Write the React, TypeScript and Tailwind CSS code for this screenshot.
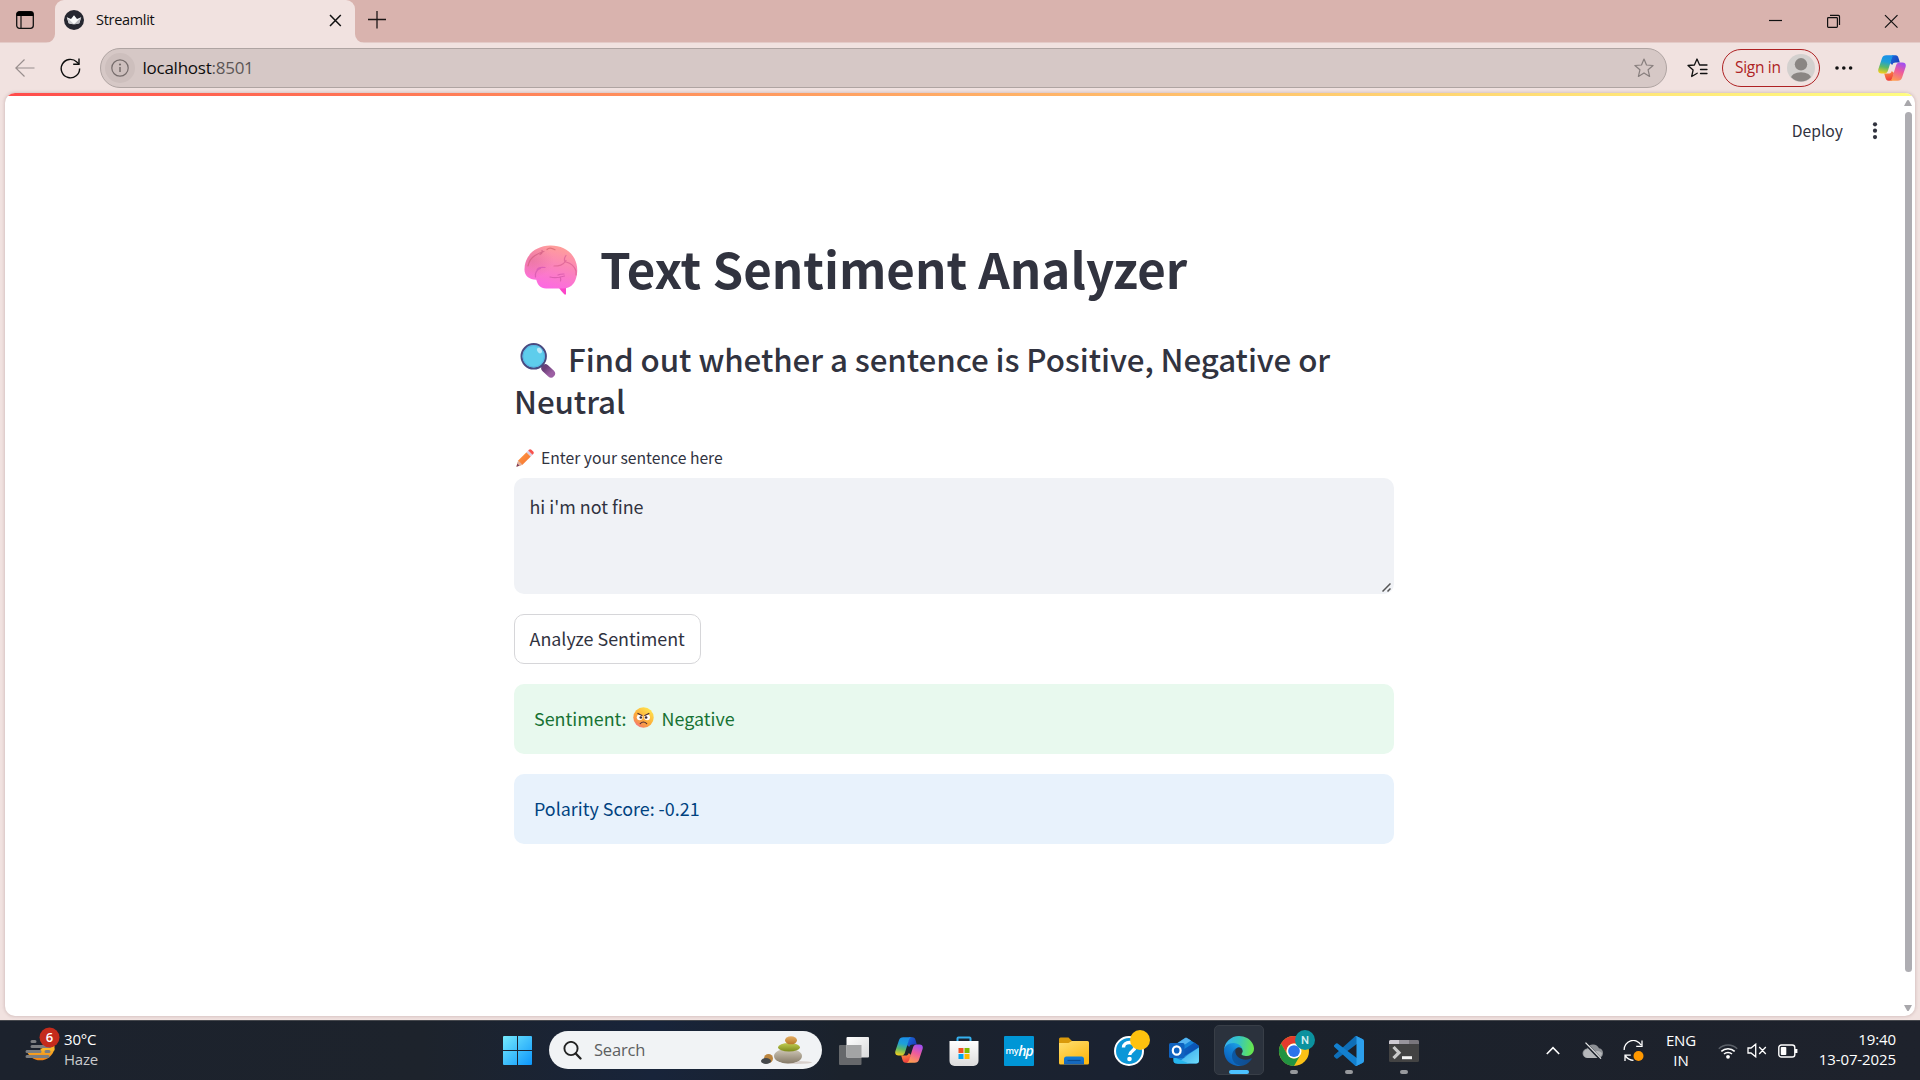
import React from 'react';

const UI = "font-['Open_Sans','Noto_Sans',sans-serif]";
const APP = "font-['Noto_Sans_CJK_SC','Source_Sans_Pro',sans-serif]";

/* ---------- browser icons ---------- */

function TabActionsIcon() {
  return (
    <svg width="18" height="18" viewBox="0 0 18 18" className="shrink-0">
      <rect x="0.7" y="0.7" width="16.6" height="16.6" rx="2.8" fill="none" stroke="#111" strokeWidth="1.3" />
      <path d="M.6 5V3.2A2.6 2.6 0 0 1 3.2.6h11.6a2.6 2.6 0 0 1 2.6 2.6V5z" fill="#000" />
      <path d="M5 5v12" stroke="#111" strokeWidth="1.2" />
    </svg>
  );
}

function StreamlitFavicon() {
  return (
    <svg width="20" height="20" viewBox="0 0 20 20" className="shrink-0">
      <circle cx="10" cy="10" r="10" fill="#262730" />
      <path d="M2.800 7.200 7 9l3-3.800L13 9l4.200-1.800-1.900 6Q10 15.300 4.700 13.200z" fill="#fafafa" />
      <path d="M2.800 7.200 10 14.300q-3 0-5.300-1.100z" fill="#c9c9cd" />
      <path d="M17.200 7.200 10 14.300q3 0 5.300-1.100z" fill="#b9b9be" />
    </svg>
  );
}

function BackIcon() {
  return (
    <svg width="20" height="18" viewBox="0 0 20 18" fill="none" stroke="#988e8d" strokeWidth="1.2" className="shrink-0">
      <path d="M19.500 9H.8M9.500.5.8 9l8.700 8.500" />
    </svg>
  );
}

function ReloadIcon() {
  return (
    <svg width="21" height="21" viewBox="0 0 21 21" fill="none" stroke="#0c0c0c" strokeWidth="1.400" className="shrink-0">
      <path d="M19.600 10.400A9.200 9.200 0 1 1 16.800 4L19 6" />
      <path d="M19 .5V6.200H13.200" />
    </svg>
  );
}

function StarIcon() {
  return (
    <svg width="20" height="20" viewBox="0 0 20 20" fill="none" stroke="#877e7d" strokeWidth="1.200" strokeLinejoin="round">
      <path d="m10 1 2.500 6 6.600.5-5 4.300 1.500 6.600L10 14.900l-5.600 3.500 1.500-6.600-5-4.300L7.500 7z" />
    </svg>
  );
}

function FavoritesIcon() {
  return (
    <svg width="21" height="20" viewBox="0 0 21 20" fill="none" stroke="#111" strokeWidth="1.300" strokeLinejoin="round" strokeLinecap="round">
      <path d="M10.200 15.200 4.700 18.500l1.400-6.500L1 7.500 7.400 7 10 1l2.600 6H20M13.500 11.500H20M13.500 15.500H20" />
    </svg>
  );
}

function Avatar() {
  return (
    <svg width="28" height="28" viewBox="0 0 28 28">
      <defs>
        <clipPath id="avatarClip"><circle cx="14" cy="14" r="13.500" /></clipPath>
      </defs>
      <circle cx="14" cy="14" r="14" fill="#d3d0ce" />
      <circle cx="14" cy="10.300" r="6.200" fill="#8a8683" />
      <ellipse cx="14" cy="24.700" rx="10.300" ry="6.500" fill="#8a8683" clipPath="url(#avatarClip)" />
    </svg>
  );
}

function CopilotIcon({ id, size }: { id: string; size: number }) {
  return (
    <svg width={size} height={size * 0.93} viewBox="0 0 28 26" className="shrink-0">
      <defs>
        <linearGradient id={id + 'a'} x1="0.500" y1="0" x2="0.300" y2="1">
          <stop offset="0" stopColor="#1a8fe8" />
          <stop offset="0.350" stopColor="#1ea0d8" />
          <stop offset="0.650" stopColor="#5cb869" />
          <stop offset="1" stopColor="#f2cf1c" />
        </linearGradient>
        <linearGradient id={id + 'b'} x1="0.700" y1="0" x2="0.300" y2="1">
          <stop offset="0" stopColor="#a24ff0" />
          <stop offset="0.450" stopColor="#ee5b9c" />
          <stop offset="1" stopColor="#ffa04d" />
        </linearGradient>
        <linearGradient id={id + 'c'} x1="0" y1="0" x2="1" y2="0.600">
          <stop offset="0" stopColor="#1a6de0" />
          <stop offset="1" stopColor="#1b3fb8" />
        </linearGradient>
        <linearGradient id={id + 'd'} x1="0" y1="0" x2="0.300" y2="1">
          <stop offset="0" stopColor="#ff9a42" />
          <stop offset="1" stopColor="#ef3f3d" />
        </linearGradient>
      </defs>
      <path d="M14 .3h3.500c1.700 0 2.500 1 3 2.600l1.300 4.600h-4c-2 0-3 .7-3.600 2.600L12 8z" fill={`url(#${id}c)`} />
      <path d="M14 25.700h-3.500c-1.700 0-2.500-1-3-2.600L6.200 18.500h4c2 0 3-.7 3.600-2.600L16 18z" fill={`url(#${id}d)`} />
      <path d="M8.300.3h9c-2 0-2.800 1-3.400 2.800l-4 12.600c-.6 1.900-1.700 2.800-3.600 2.800H3.500C.8 18.500-.3 16.600.4 14L3.900 3.500C4.600 1.400 6 .3 8.300.3z" fill={`url(#${id}a)`} />
      <path d="M19.700 25.700h-9c2 0 2.800-1 3.400-2.800l4-12.600c.6-1.900 1.700-2.800 3.600-2.800h2.800c2.700 0 3.800 1.900 3.100 4.500l-3.500 10.500c-.7 2.100-2.100 3.200-4.400 3.200z" fill={`url(#${id}b)`} />
    </svg>
  );
}

/* ---------- emoji drawings ---------- */

function BrainEmoji() {
  return (
    <svg width="55" height="50" viewBox="0 0 55 50" className="shrink-0">
      <defs>
        <linearGradient id="brain" x1="0.650" y1="0" x2="0.350" y2="1">
          <stop offset="0" stopColor="#ff9f98" />
          <stop offset="0.450" stopColor="#fb85b9" />
          <stop offset="1" stopColor="#fc68e4" />
        </linearGradient>
        <radialGradient id="brainShade" cx="0.150" cy="0.350" r="0.400">
          <stop offset="0" stopColor="#dd6a8e" stopOpacity="0.450" />
          <stop offset="1" stopColor="#dd6a8e" stopOpacity="0" />
        </radialGradient>
      </defs>
      <path d="M34 41h8v8.500h-1.500C37.500 46.500 35.500 44 34 41z" fill="#fb45c8" />
      <path d="M26 .6C39 .3 49.500 7 52.500 19c2 8-.3 16-3 19.500-2.500 3.500-6 5-11 5H22c-5.500 0-8.500-3.500-9.700-8.700C5 34.500.5 31 .5 24.500.5 10 12 1 26 .6z" fill="url(#brain)" />
      <path d="M26 .6C39 .3 49.500 7 52.500 19c2 8-.3 16-3 19.500-2.500 3.500-6 5-11 5H22c-5.500 0-8.500-3.500-9.700-8.700C5 34.500.5 31 .5 24.500.5 10 12 1 26 .6z" fill="url(#brainShade)" />
      <g fill="none" strokeLinecap="round" strokeWidth="1.200">
        <path d="M4 21c1-5 3-8 7-10.500S17.500 7 20 6.500M16 9.500c2-1 2.500-2.500 2-4" stroke="#d9678a" />
        <path d="M23 4.500c2-2 5-1.500 8 .3" stroke="#e0737c" />
        <path d="M11.500 32c-1-4 1.500-7.500 5-8.500M13 25c1-3 4-3 8-2.500" stroke="#dd60b4" />
        <path d="M26 32c5 1.500 10 .5 14.500-1M36 32c1 1.500 1 2.500.5 4M34 30c2-1 4-1 6-1" stroke="#dd60b0" />
        <path d="M30 21c5 0 9-.5 12-5.500M41 17c-1-2-1-4 1-6.500M42 17c4 1 8 3 10 9v4" stroke="#e36c9b" />
      </g>
    </svg>
  );
}

function MagnifierEmoji() {
  return (
    <svg width="36" height="35" viewBox="0 0 36 35" className="inline-block align-top">
      <defs>
        <linearGradient id="lensHandle" x1="0" y1="0" x2="1" y2="1">
          <stop offset="0" stopColor="#6b3f78" />
          <stop offset="1" stopColor="#9c5fa3" />
        </linearGradient>
      </defs>
      <path d="m20.500 21.500 4.500 4" stroke="#4c4468" strokeWidth="3" />
      <path d="m25.300 25.200 5.700 5.300" stroke="url(#lensHandle)" strokeWidth="8" strokeLinecap="round" />
      <circle cx="13.700" cy="13.300" r="12.200" fill="#5ecdec" stroke="#4a4a80" strokeWidth="2" />
      <circle cx="13.700" cy="13.300" r="10.700" fill="none" stroke="#58b4e4" strokeWidth="1" />
      <ellipse cx="19.500" cy="7.500" rx="2.200" ry="3" transform="rotate(-35 19.500 7.500)" fill="#b8eafa" />
    </svg>
  );
}

function PencilEmoji() {
  return (
    <svg width="18" height="18" viewBox="0 0 18 18" className="shrink-0">
      <defs>
        <linearGradient id="pencil" x1="0" y1="0" x2="1" y2="1">
          <stop offset="0" stopColor="#ff9a45" />
          <stop offset="1" stopColor="#f5702f" />
        </linearGradient>
      </defs>
      <path d="M2.200 11.500 10.500 3.200l4.300 4.300-8.300 8.300L.6 17.600z" fill="url(#pencil)" />
      <path d="m2.200 11.500 4.300 4.300-5.900 1.800z" fill="#e3b2a0" />
      <path d="m.4 17.800.9-3.200 2.200 2.200z" fill="#7a3f5a" />
      <path d="m10.500 3.200 1.700-1.700 4.300 4.300-1.700 1.700z" fill="#d9cfe6" />
      <path d="m12.200 1.500.7-.7c.8-.8 1.700-.8 2.500 0l1.800 1.800c.8.8.8 1.700 0 2.500l-.7.7z" fill="#f7524d" />
    </svg>
  );
}

function AngryEmoji() {
  return (
    <svg width="21" height="21" viewBox="0 0 21 21" className="shrink-0">
      <defs>
        <linearGradient id="angry" x1="0.850" y1="0.100" x2="0.200" y2="1">
          <stop offset="0" stopColor="#ffe34d" />
          <stop offset="0.550" stopColor="#fdac3a" />
          <stop offset="0.820" stopColor="#f78d55" />
          <stop offset="1" stopColor="#f2689a" />
        </linearGradient>
      </defs>
      <circle cx="10.500" cy="10.500" r="10.200" fill="url(#angry)" />
      <circle cx="6.700" cy="10.300" r="2.900" fill="#fff" />
      <circle cx="14.100" cy="10.300" r="2.900" fill="#fff" />
      <circle cx="7.800" cy="10.500" r="1.300" fill="#402a32" />
      <circle cx="13.100" cy="10.500" r="1.300" fill="#402a32" />
      <path d="M4.900 6.400 9 8.500M15.900 6.400l-4.100 2.100M7.200 16.600q3.200-3.200 6.500 0" fill="none" stroke="#4b2a34" strokeWidth="1.100" strokeLinecap="round" />
    </svg>
  );
}

/* ---------- taskbar icons ---------- */

function WeatherIcon() {
  return (
    <svg width="36" height="38" viewBox="0 0 36 38" className="shrink-0">
      <defs>
        <linearGradient id="sun" x1="0" y1="0" x2="0" y2="1">
          <stop offset="0" stopColor="#f9b62b" />
          <stop offset="1" stopColor="#f07f13" />
        </linearGradient>
      </defs>
      <path d="M1 20.500A14.500 14.500 0 0 0 29.500 20.500z" transform="translate(0 1)" fill="url(#sun)" />
      <path d="M17 21.500 19 19h10.500v4.500H17z" fill="#f9b62b" />
      <path d="M0 19h15.500v4.500H0z" fill="#1c222d" />
      <g stroke="#7c7e81" strokeWidth="3" strokeLinecap="round">
        <path d="M7 14.500h3M7 19.500h18M2 24.500h13M21 24.500h3M2 29.500h21" />
      </g>
      <circle cx="24.500" cy="10.500" r="10" fill="#c42b1c" />
      <text x="24.500" y="15.200" textAnchor="middle" fontFamily="Open Sans" fontSize="13" fontWeight="600" fill="#fff">6</text>
    </svg>
  );
}

function WindowsIcon() {
  return (
    <svg width="29" height="29" viewBox="0 0 29 29">
      <defs>
        <linearGradient id="win" gradientUnits="userSpaceOnUse" x1="0" y1="0" x2="29" y2="29">
          <stop offset="0" stopColor="#75eafd" />
          <stop offset="1" stopColor="#0c96fb" />
        </linearGradient>
      </defs>
      <path d="M1 0h13v14H0V1a1 1 0 0 1 1-1zM15 0h13a1 1 0 0 1 1 1v13H15zM0 15h14v14H1a1 1 0 0 1-1-1zM15 15h14v13a1 1 0 0 1-1 1H15z" fill="url(#win)" />
    </svg>
  );
}

function StonesArt() {
  return (
    <svg width="52" height="29" viewBox="0 0 52 29" className="shrink-0">
      <defs>
        <linearGradient id="stBase" x1="0" y1="0" x2="0" y2="1">
          <stop offset="0" stopColor="#d3cbbb" />
          <stop offset="1" stopColor="#857a68" />
        </linearGradient>
        <linearGradient id="stMid" x1="0" y1="0" x2="0" y2="1">
          <stop offset="0" stopColor="#c1cc52" />
          <stop offset="1" stopColor="#7d8a1c" />
        </linearGradient>
        <linearGradient id="stTop" x1="0" y1="0" x2="0" y2="1">
          <stop offset="0" stopColor="#e4ad62" />
          <stop offset="1" stopColor="#b87828" />
        </linearGradient>
      </defs>
      <ellipse cx="36" cy="26.500" rx="15" ry="1.500" fill="#d8d0cc" />
      <ellipse cx="7.500" cy="22.500" rx="4.500" ry="4.500" fill="#bb853f" />
      <ellipse cx="5" cy="25" rx="5" ry="3" fill="#45484b" />
      <ellipse cx="27" cy="20" rx="14" ry="7.500" fill="url(#stBase)" />
      <ellipse cx="28" cy="11.300" rx="11" ry="4.300" fill="url(#stMid)" />
      <ellipse cx="30" cy="4.300" rx="6" ry="4" fill="url(#stTop)" />
    </svg>
  );
}

function TaskViewIcon() {
  return (
    <svg width="30" height="28" viewBox="0 0 30 28">
      <defs>
        <linearGradient id="tvA" x1="0" y1="0" x2="1" y2="1">
          <stop offset="0" stopColor="#fff" />
          <stop offset="1" stopColor="#d8d9da" />
        </linearGradient>
      </defs>
      <rect x="0" y="8" width="22.500" height="20" rx="1" fill="#66686b" />
      <rect x="7.500" y="0" width="22.500" height="20.500" rx="1" fill="url(#tvA)" />
      <rect x="7.500" y="8" width="15" height="12.500" fill="#a3a4a5" />
    </svg>
  );
}

function StoreIcon() {
  return (
    <svg width="30" height="30" viewBox="0 0 30 30">
      <defs>
        <linearGradient id="bag" x1="0" y1="0" x2="0" y2="1">
          <stop offset="0" stopColor="#fff" />
          <stop offset="1" stopColor="#dcdcdc" />
        </linearGradient>
      </defs>
      <path d="M8.500 6V2.500A1 1 0 0 1 9.500 1.500h11a1 1 0 0 1 1 1V6" fill="none" stroke="#35b0ee" strokeWidth="2" />
      <path d="M.5 5h29v20a5 5 0 0 1-5 5h-19a5 5 0 0 1-5-5z" fill="url(#bag)" />
      <path d="M9.500 12h5v5h-5z" fill="#f25022" />
      <path d="M15.500 12h5v5h-5z" fill="#7fba00" />
      <path d="M9.500 18h5v5h-5z" fill="#00a4ef" />
      <path d="M15.500 18h5v5h-5z" fill="#ffb900" />
    </svg>
  );
}

function MyHpIcon() {
  return (
    <div className="flex h-[30px] w-[30px] items-center justify-center rounded-[1px] bg-[#0096d6] font-['Open_Sans',sans-serif] leading-none text-white">
      <span className="text-[9px] font-semibold tracking-[-0.3px]">my</span>
      <span className="text-[14px] font-semibold italic tracking-[-1.2px]">hp</span>
    </div>
  );
}

function FolderIcon() {
  return (
    <svg width="30" height="28" viewBox="0 0 30 28">
      <defs>
        <linearGradient id="fold" x1="0" y1="0" x2="0.600" y2="1">
          <stop offset="0" stopColor="#ffdf72" />
          <stop offset="1" stopColor="#fdb913" />
        </linearGradient>
        <linearGradient id="foldBlue" x1="0" y1="0" x2="0" y2="1">
          <stop offset="0" stopColor="#0c7fdc" />
          <stop offset="1" stopColor="#1a62b4" />
        </linearGradient>
      </defs>
      <path d="M0 2a1.500 1.500 0 0 1 1.500-1.500h8L13 4v6H0z" fill="#d9990b" />
      <path d="M0 6h9.500l3.500-2h15.500A1.500 1.500 0 0 1 30 5.500V26a1.500 1.500 0 0 1-1.500 1.500h-27A1.500 1.500 0 0 1 0 26z" fill="url(#fold)" />
      <path d="M5 27.500V22a2.500 2.500 0 0 1 2.500-2.500h15A2.500 2.500 0 0 1 25 22v5.500z" fill="url(#foldBlue)" />
      <path d="M8.500 23.500h13" stroke="#0b4c91" strokeWidth="1.200" />
    </svg>
  );
}

function HelpIcon() {
  return (
    <svg width="30" height="30" viewBox="0 0 30 30" className="overflow-visible">
      <circle cx="15" cy="15" r="14" fill="#0b97d8" stroke="#fff" strokeWidth="2" />
      <path d="M9.500 11.500c0-6.500 11.500-6.500 11.500-.5 0 4-5.300 4-5.300 8" fill="none" stroke="#fff" strokeWidth="3.400" />
      <circle cx="15.500" cy="23" r="2.300" fill="#fff" />
      <circle cx="26" cy="4" r="10" fill="#ffc20e" />
    </svg>
  );
}

function OutlookIcon() {
  return (
    <svg width="30" height="27" viewBox="0 0 30 27">
      <defs>
        <linearGradient id="olA" x1="0" y1="0" x2="1" y2="1">
          <stop offset="0" stopColor="#2f9fe8" />
          <stop offset="1" stopColor="#6fdcfa" />
        </linearGradient>
        <linearGradient id="olB" x1="0" y1="0" x2="1" y2="0.500">
          <stop offset="0" stopColor="#0d65c8" />
          <stop offset="1" stopColor="#0a4fae" />
        </linearGradient>
      </defs>
      <path d="M4 9 15.500 1.200a3 3 0 0 1 3 0L28.700 8a2.500 2.500 0 0 1 1.300 2v13.500a3 3 0 0 1-3 3H7.500a3 3 0 0 1-3-3z" fill="#1583d8" />
      <path d="M4.500 8.800 17 .6l5 3L6 14z" fill="#54b4f0" />
      <path d="M9 16 25.500 5.500 29 8.200q1 .8 1 2L14 20z" fill="url(#olB)" />
      <path d="M30 10.500V23.500a3 3 0 0 1-3 3H8L20 17z" fill="url(#olA)" />
      <path d="M4.500 20 20 26.500H7.500a3 3 0 0 1-3-3z" fill="#27b7ee" />
      <rect x="0" y="6" width="15.500" height="15" rx="1.500" fill="#0f62bf" />
      <ellipse cx="7.700" cy="13.500" rx="3.900" ry="4.200" fill="none" stroke="#fff" strokeWidth="2.200" />
    </svg>
  );
}

function EdgeIcon() {
  return (
    <svg width="30" height="30" viewBox="0 0 256 256">
      <defs>
        <linearGradient id="edA" x1="63" y1="178" x2="241" y2="178" gradientUnits="userSpaceOnUse">
          <stop offset="0" stopColor="#0c59a4" />
          <stop offset="1" stopColor="#114a8b" />
        </linearGradient>
        <linearGradient id="edB" x1="150" y1="100" x2="46" y2="226" gradientUnits="userSpaceOnUse">
          <stop offset="0" stopColor="#1b9de2" />
          <stop offset="0.400" stopColor="#1280d4" />
          <stop offset="1" stopColor="#0c62bb" />
        </linearGradient>
        <linearGradient id="edC" x1="20" y1="60" x2="245" y2="100" gradientUnits="userSpaceOnUse">
          <stop offset="0" stopColor="#35b3ee" />
          <stop offset="0.450" stopColor="#36c6c0" />
          <stop offset="1" stopColor="#66e64f" />
        </linearGradient>
      </defs>
      <path d="M231 190.500a93 93 0 0 1-10.500 4.700 102 102 0 0 1-35.900 6.500c-47.300 0-88.500-32.500-88.500-74.300a31.500 31.500 0 0 1 16.400-27.300c-42.800 1.800-53.800 46.400-53.800 72.500 0 73.900 68.100 81.400 82.800 81.400 7.900 0 19.800-2.300 27-4.600l1.300-.4a128.300 128.300 0 0 0 66.600-52.800 4 4 0 0 0-5.400-5.700z" fill="url(#edA)" />
      <path d="M105.700 241.400a79.200 79.200 0 0 1-22.700-21.300 80.700 80.700 0 0 1 29.500-120c3.200-1.500 8.500-4.100 15.600-4a32.400 32.400 0 0 1 25.700 13 31.900 31.900 0 0 1 6.300 18.700c0-.2 24.500-79.600-80-79.600-43.900 0-80 41.700-80 78.200a130.200 130.200 0 0 0 12.100 56 128 128 0 0 0 156.400 67 75.500 75.500 0 0 1-62.800-8z" fill="url(#edB)" />
      <path d="M152.300 148.900c-.8 1-3.300 2.500-3.300 5.700 0 2.600 1.700 5.100 4.700 7.200 14.400 10 41.500 8.700 41.600 8.700a59.600 59.600 0 0 0 30.300-8.300 61.400 61.400 0 0 0 30.400-52.900c.3-22.400-8-37.300-11.300-43.900C223.500 23.900 177.700 0 128 0A128 128 0 0 0 0 126.200c.5-36.500 36.800-66 80-66 3.500 0 23.500.3 42 10.100 16.300 8.600 24.900 18.900 30.800 29.200 6.200 10.700 7.300 24.100 7.300 29.500s-2.700 13.300-7.800 19.900z" fill="url(#edC)" />
    </svg>
  );
}

function ChromeIcon() {
  return (
    <svg width="30" height="30" viewBox="0 0 48 48" className="overflow-visible">
      <circle cx="24" cy="24" r="24" fill="#fbc116" />
      <path d="M3.200 12A24 24 0 0 1 44.800 12H24a12 12 0 0 0-10.400 18z" fill="#e33b2e" />
      <path d="M3.200 12A24 24 0 0 0 24 48l10.400-18a12 12 0 0 1-20.800 0z" fill="#229342" />
      <circle cx="24" cy="24" r="12" fill="#fff" />
      <circle cx="24" cy="24" r="9.400" fill="#2a74ea" />
      <circle cx="41.600" cy="6.400" r="16" fill="#0b929e" />
      <text x="41.600" y="13" textAnchor="middle" fontFamily="Roboto" fontSize="18" fontWeight="500" fill="#d4eef0">N</text>
    </svg>
  );
}

function VsCodeIcon() {
  return (
    <svg width="30" height="30" viewBox="0 0 100 100">
      <path d="M96.500 10.800 75.900.9a6.200 6.200 0 0 0-7.100 1.200L1.300 63.600a4.200 4.200 0 0 0 0 6.200l5.500 5a4.200 4.200 0 0 0 5.300.2L93.400 13.400C96.100 11.300 100 13.300 100 16.700v-.2a6.300 6.300 0 0 0-3.500-5.700z" fill="#0f6fb8" />
      <path d="m96.500 89.200-20.600 9.900a6.200 6.200 0 0 1-7.100-1.200L1.300 36.400a4.200 4.200 0 0 1 0-6.200l5.500-5a4.200 4.200 0 0 1 5.300-.2l81.300 61.600c2.700 2.100 6.600.1 6.600-3.300v.2a6.300 6.300 0 0 1-3.500 5.700z" fill="#1380cf" />
      <path d="M75.900 99.100a6.200 6.200 0 0 1-7.100-1.200c2.300 2.300 6.200.7 6.200-2.600V4.700c0-3.300-3.900-4.900-6.200-2.600A6.200 6.200 0 0 1 75.900.9l20.600 9.900a6.300 6.300 0 0 1 3.500 5.700v67a6.300 6.300 0 0 1-3.500 5.700z" fill="#2c9fec" />
    </svg>
  );
}

function TerminalIcon() {
  return (
    <svg width="30" height="22" viewBox="0 0 30 22">
      <rect width="30" height="22" rx="1.500" fill="#434343" />
      <path d="M0 1.500A1.500 1.500 0 0 1 1.500 0H10v4H0z" fill="#cfcbd3" />
      <path d="M10 0h10v4H10z" fill="#98959c" />
      <path d="M20 0h8.500A1.500 1.500 0 0 1 30 1.500V4H20z" fill="#79767c" />
      <path d="m4.500 7 5.500 5.700-5.500 5.500" fill="none" stroke="#c9c9c9" strokeWidth="3.200" />
      <path d="M13 17.700h10" stroke="#f5f5f5" strokeWidth="3" />
    </svg>
  );
}

function TaskCell({ children, mark }: { children: React.ReactNode; mark?: 'active' | 'open' }) {
  return (
    <div className="relative flex h-[59px] w-[55px] shrink-0 items-center justify-center">
      {mark === 'active' && (
        <div className="absolute left-[2px] top-[4px] h-[50px] w-[50px] rounded-[5px] border border-[#383e47] bg-[#2b323d]" />
      )}
      <div className="relative mr-px flex items-center justify-center">{children}</div>
      {mark === 'active' && <div className="absolute left-[17px] top-[49px] h-1 w-5 rounded-full bg-[#4cc2ff]" />}
      {mark === 'open' && <div className="absolute left-[23px] top-[49px] h-1 w-2 rounded-full bg-[#97999d]" />}
    </div>
  );
}

/* ---------- page parts ---------- */

function TabStrip() {
  return (
    <div className="flex h-[43px] shrink-0 border-b border-[#e4cbc8] bg-[#d9b3ae]">
      <div className="flex w-[55px] shrink-0 items-start pl-4 pt-[11px]">
        <TabActionsIcon />
      </div>
      <div className="relative flex h-[43px] w-[300px] shrink-0 items-center rounded-t-[9px] bg-[#f1e2e0] pb-[3px] pl-[9px] pr-[12px]">
        <svg width="9" height="9" className="absolute -left-[9px] bottom-0"><path d="M9 0v9H0A9 9 0 0 0 9 0z" fill="#f1e2e0" /></svg>
        <svg width="9" height="9" className="absolute -right-[9px] bottom-0"><path d="M0 0v9h9A9 9 0 0 1 0 0z" fill="#f1e2e0" /></svg>
        <StreamlitFavicon />
        <span className={`${UI} ml-3 text-[14.5px] leading-5 tracking-[-0.3px] text-[#111]`}>Streamlit</span>
        <svg width="13" height="13" viewBox="0 0 13 13" className="ml-auto mr-px mt-px">
          <path d="m1 1 10.800 11M11.800 1 1 12" stroke="#111" strokeWidth="1.500" />
        </svg>
      </div>
      <svg width="18" height="18" viewBox="0 0 18 18" className="ml-[13px] mt-[11px]">
        <path d="M9 0v17.500M0 8.500h18" stroke="#1c1616" strokeWidth="1.300" />
      </svg>
      <div className="ml-auto flex pt-[14px]">
        <svg width="151" height="16" viewBox="0 0 151 16" fill="none" stroke="#111" strokeWidth="1.200">
          <path d="M0 6.500h13" />
          <rect x="58.600" y="3.600" width="9.800" height="9.800" rx="0.800" />
          <path d="M61 1.400h8.500q1 0 1 1V11" />
          <path d="m116 1.200 12.500 12.500M128.500 1.200 116 13.700" />
        </svg>
      </div>
    </div>
  );
}

function Toolbar() {
  return (
    <div className="flex h-[50px] shrink-0 items-center">
      <div className="ml-[15px]"><BackIcon /></div>
      <div className="ml-[24.500px] mt-px"><ReloadIcon /></div>
      <div className="ml-[19.500px] flex h-10 w-[1567px] shrink-0 items-center rounded-full border border-[#afa4a2] bg-[#d6c8c6] pl-[4px] pr-3">
        <span className="flex h-[30px] w-[30px] items-center justify-center rounded-full bg-[#cdbfbd]">
          <svg width="18" height="18" viewBox="0 0 18 18" fill="none" stroke="#756c6b" strokeWidth="1.200">
            <circle cx="9" cy="9" r="8.200" />
            <path d="M9 8v5" strokeWidth="1.500" />
            <circle cx="9" cy="5.500" r="0.500" fill="#756c6b" />
          </svg>
        </span>
        <span className={`${UI} ml-[7.500px] text-[17px] leading-6 tracking-[-0.25px] text-[#0d0d0d]`}>
          localhost<span className="text-[#5c5656]">:8501</span>
        </span>
        <span className="ml-auto"><StarIcon /></span>
      </div>
      <div className="ml-[20px]"><FavoritesIcon /></div>
      <div className={`${UI} ml-[14px] mr-[-1px] flex h-[38px] w-[98px] shrink-0 items-center rounded-full border-[1.500px] border-[#ae2224] pl-[12px] text-[15.5px] tracking-[-0.3px] text-[#ae2224]`}>
        <span className="w-[52px] shrink-0 whitespace-nowrap">Sign in</span>
        <Avatar />
      </div>
      <svg width="18" height="4" viewBox="0 0 18 4" className="ml-4" fill="#111">
        <circle cx="2" cy="2" r="1.800" /><circle cx="8.800" cy="2" r="1.800" /><circle cx="15.600" cy="2" r="1.800" />
      </svg>
      <div className="ml-[25px]"><CopilotIcon id="cpTop" size={28} /></div>
    </div>
  );
}

function StreamlitPage() {
  return (
    <div className="mx-[5px] flex h-[923px] shrink-0 flex-col overflow-hidden rounded-[10px] bg-white shadow-[0_0_3px_1px_rgba(120,80,80,0.200)]">
      <div className="h-[3px] shrink-0 bg-gradient-to-r from-[#ff4b4b] to-[#fffd80]" />
      <div className="flex flex-1">
        <div className={`${APP} flex-1 text-[#31333f]`}>
          <div className="flex h-[70px] items-center justify-end pr-[24px]">
            <span className="text-[15.7px] leading-6">Deploy</span>
            <svg width="6" height="18" viewBox="0 0 6 18" className="ml-[29px]" fill="#31333f">
              <circle cx="3" cy="2.300" r="2.100" /><circle cx="3" cy="8.700" r="2.100" /><circle cx="3" cy="15.100" r="2.100" />
            </svg>
          </div>
          <div className="ml-[509px] mt-[72px] w-[880px]">
            <h1 className="flex h-[60px] items-center pl-[10px]">
              <span className="mt-[4px]"><BrainEmoji /></span>
              <span className="ml-[21px] whitespace-nowrap text-[49.2px] font-bold leading-[60px]">Text Sentiment Analyzer</span>
            </h1>
            <h3 className="mt-[40px] text-[31.300px] font-medium leading-[42px] tracking-[-0.08px]">
              <span className="inline-block h-[42px] w-[54px] pl-[6px] pt-[5px] align-top"><MagnifierEmoji /></span>
              Find out whether a sentence is Positive, Negative or
              <br />
              Neutral
            </h3>
            <label className="mt-[22px] flex h-7 items-center pl-[2px] text-[15.700px] leading-7">
              <PencilEmoji />
              <span className="ml-[7px]">Enter your sentence here</span>
            </label>
            <div className="mt-[6px] flex h-[116px] justify-between rounded-[10px] bg-[#f0f2f6] pl-[15.500px] pt-[14px]">
              <span className="text-[17.900px] leading-7">hi i'm not fine</span>
              <svg width="9" height="9" viewBox="0 0 9 9" className="mb-[2px] mr-[3px] self-end" stroke="#555" strokeWidth="1.500">
                <path d="M.5 8.500 8.500.5M5.500 8.500l3-3" />
              </svg>
            </div>
            <button className="mt-5 flex h-[50px] w-[187px] items-center rounded-[10px] border border-[#d6d6d9] bg-white pl-[14.500px] text-[17.900px]">
              <span className="pb-[3px] leading-7">Analyze Sentiment</span>
            </button>
            <div className="mt-5 flex h-[70px] items-center rounded-[10px] bg-[#e8f9ee] pb-[3px] pl-5 text-[17.900px] leading-7 text-[#177233]">
              <span>Sentiment:</span>
              <span className="ml-[6px] mr-[8px]"><AngryEmoji /></span>
              <span>Negative</span>
            </div>
            <div className="mt-5 flex h-[70px] items-center rounded-[10px] bg-[#e8f2fc] pb-[3px] pl-5 text-[17.900px] leading-7 text-[#004280]">
              Polarity Score: -0.21
            </div>
          </div>
        </div>
        <div className="flex w-[13px] shrink-0 flex-col items-center pb-[5px] pr-px pt-1">
          <svg width="8" height="6"><path d="M0 6 3 .6Q4-.4 5 .6L8 6z" fill="#a8a7ab" /></svg>
          <div className="mt-[6px] w-[7px] flex-1 rounded-full bg-[#aeadb2]" />
          <svg width="8" height="6" className="mt-[33px]"><path d="M0 0 3 5.400Q4 6.400 5 5.400L8 0z" fill="#a8a7ab" /></svg>
        </div>
      </div>
    </div>
  );
}

function SystemTray() {
  return (
    <div className={`${UI} ml-auto flex h-[59px] items-center text-[15px] text-white`}>
      <svg width="14" height="9" viewBox="0 0 14 9" fill="none" stroke="#fff" strokeWidth="1.600"><path d="m.8 8 6.200-6.300L13.200 8" /></svg>
      <svg width="22" height="18" viewBox="0 0 22 18" className="ml-[22px]">
        <path d="M5.500 16A4.700 4.700 0 0 1 5 6.600a6.500 6.500 0 0 1 12-.3A4.900 4.900 0 0 1 16.500 16z" fill="#8d9095" />
        <path d="M3 8q6-3 9 2.500 4-3 8 .5-.5 5-4 5H5.500Q1 15 1.500 10.500z" fill="#b6b8bb" />
        <path d="m3 1 15.500 16" stroke="#1c222c" strokeWidth="3" />
        <path d="m3.500.6 15.500 16" stroke="#eee" strokeWidth="1.200" />
      </svg>
      <svg width="22" height="22" viewBox="0 0 22 22" className="ml-[19px]" fill="none" stroke="#fff" strokeWidth="1.300">
        <path d="M1.200 10A9 9 0 0 1 18 5M19 .5v5.800h-5.800M2 21v-5.800h5.800M2.500 16q3 4 8 4.300" />
        <circle cx="15.500" cy="16" r="5" fill="#ff9800" stroke="none" />
      </svg>
      <div className="ml-[18px] w-[36px] pb-[2px] text-center leading-5 tracking-[-0.1px]">ENG<br />IN</div>
      <svg width="20" height="16" viewBox="0 0 20 16" className="ml-[19px]" fill="none" stroke="#fff" strokeWidth="1.500">
        <path d="M.8 5.800a13 13 0 0 1 18.400 0" stroke="#5b6068" />
        <path d="M3.300 8.400a9.600 9.600 0 0 1 13.400 0M6 11a5.800 5.800 0 0 1 8 0" />
        <circle cx="10" cy="13.800" r="1.900" fill="#fff" stroke="none" />
      </svg>
      <svg width="20" height="15" viewBox="0 0 20 15" className="ml-[9px]" fill="none" stroke="#fff" strokeWidth="1.300">
        <path d="M1 5v5h3l4.700 3.800V1.200L4 5zM12.200 4l6.600 7M18.800 4l-6.600 7" />
      </svg>
      <svg width="21" height="14" viewBox="0 0 21 14" className="ml-[11px]" fill="none" stroke="#fff" strokeWidth="1.400">
        <rect x="0.800" y="1" width="16" height="12" rx="2.600" />
        <path d="M18.200 5v4" strokeWidth="2.400" />
        <rect x="2.800" y="3" width="5.500" height="8" rx="0.800" fill="#fff" stroke="none" />
      </svg>
      <div className="ml-[17px] w-[80px] pb-[4px] text-right leading-5 tracking-[-0.1px]">19:40<br />13-07-2025</div>
      <div className="w-6" />
    </div>
  );
}

function Taskbar() {
  return (
    <div className="flex h-[60px] shrink-0 border-t border-[#46484d] bg-[linear-gradient(90deg,#1c222d_0%,#1d232c_22%,#18243a_34%,#1b222c_44%,#1a2231_58%,#1b212b_65%,#1e222c_100%)]">
      <div className={`${UI} flex w-[490px] shrink-0 items-start pl-[25px] pt-[6px] text-[15px] leading-5 text-white`}>
        <WeatherIcon />
        <div className="ml-[3px] mt-[2px] tracking-[-0.2px]">
          30°C<br /><span className="text-[#c9cacc]">Haze</span>
        </div>
      </div>
      <TaskCell><WindowsIcon /></TaskCell>
      <div className="ml-[4px] mt-[10px] flex h-[38px] w-[273px] shrink-0 items-center rounded-full bg-[#f1f3f5] pl-[14px] pr-[9px]">
        <svg width="19" height="19" viewBox="0 0 19 19" fill="none" stroke="#222" className="shrink-0">
          <circle cx="8" cy="7.500" r="6.600" strokeWidth="1.900" />
          <path d="m12.700 12.500 4.800 5" strokeWidth="2.300" strokeLinecap="round" />
        </svg>
        <span className={`${UI} ml-3 mt-px text-[16.5px] tracking-[-0.2px] text-[#5d5f61]`}>Search</span>
        <span className="ml-auto"><StonesArt /></span>
      </div>
      <div className="ml-[5px] flex">
        <TaskCell><TaskViewIcon /></TaskCell>
        <TaskCell><CopilotIcon id="cpTask" size={28} /></TaskCell>
        <TaskCell><StoreIcon /></TaskCell>
        <TaskCell><MyHpIcon /></TaskCell>
        <TaskCell><FolderIcon /></TaskCell>
        <TaskCell><HelpIcon /></TaskCell>
        <TaskCell><OutlookIcon /></TaskCell>
        <TaskCell mark="active"><EdgeIcon /></TaskCell>
        <TaskCell mark="open"><ChromeIcon /></TaskCell>
        <TaskCell mark="open"><VsCodeIcon /></TaskCell>
        <TaskCell mark="open"><TerminalIcon /></TaskCell>
      </div>
      <SystemTray />
    </div>
  );
}

export default function App() {
  return (
    <div className="flex h-[1080px] w-[1920px] flex-col overflow-hidden bg-[#f1e2e0]">
      <TabStrip />
      <Toolbar />
      <StreamlitPage />
      <div className="h-1 shrink-0" />
      <Taskbar />
    </div>
  );
}
